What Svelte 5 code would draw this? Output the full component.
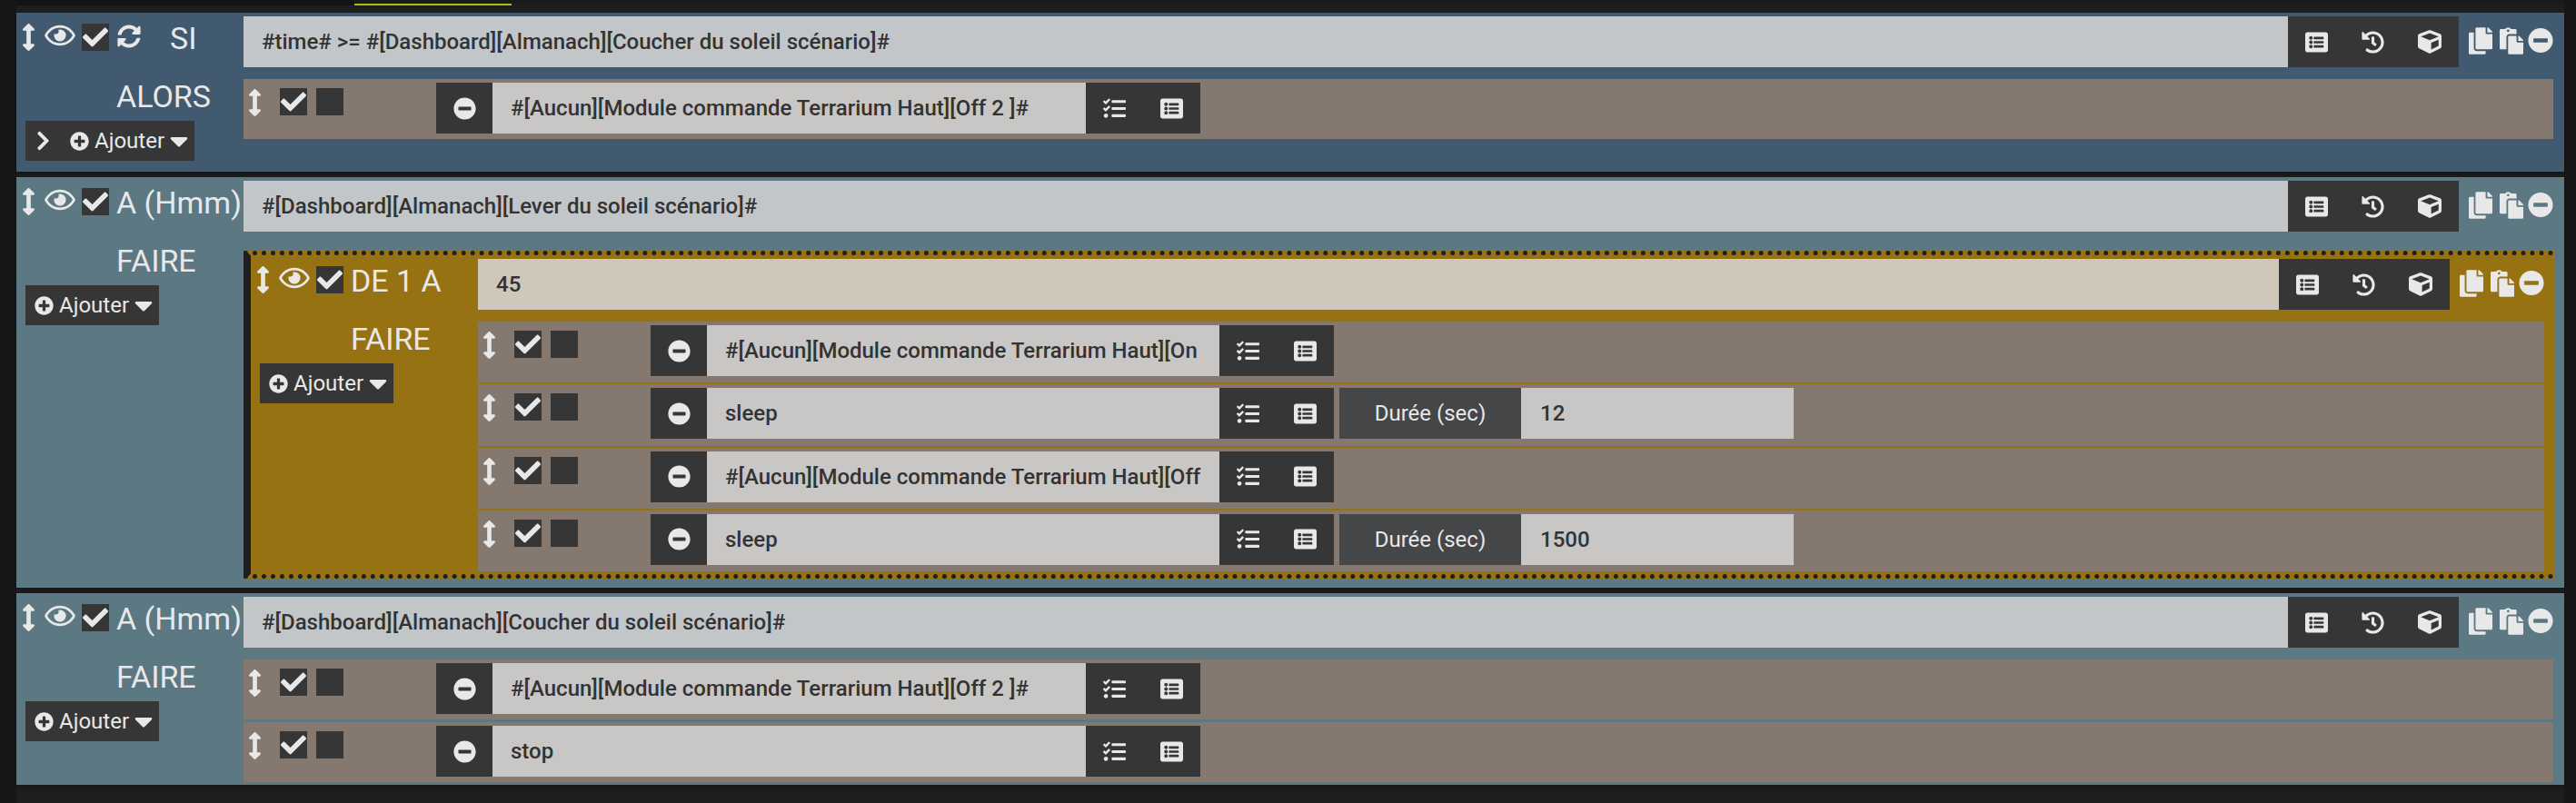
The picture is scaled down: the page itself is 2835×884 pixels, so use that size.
<script>
  // font-awesome style glyph paths, [viewBox width, path]
  const icons = {
    move: [256, 'M214.059 377.941H168V134.059h46.059c21.382 0 32.09-25.851 16.971-40.971L144.971 7.029c-9.373-9.373-24.569-9.373-33.941 0L24.971 93.088c-15.119 15.119-4.411 40.971 16.971 40.971H88v243.882H41.941c-21.382 0-32.09 25.851-16.971 40.971l86.059 86.059c9.373 9.373 24.569 9.373 33.941 0l86.059-86.059c15.12-15.119 4.412-40.971-16.97-40.971z'],
    eye: [576, 'M288 144a110.94 110.94 0 0 0-31.24 5 55.4 55.4 0 0 1 7.24 27 56 56 0 0 1-56 56 55.4 55.4 0 0 1-27-7.24A111.71 111.71 0 1 0 288 144zm284.52 97.4C518.29 135.59 410.93 64 288 64S57.68 135.64 3.48 241.41a32.35 32.35 0 0 0 0 29.19C57.71 376.41 165.07 448 288 448s230.32-71.64 284.52-177.41a32.35 32.35 0 0 0 0-29.19zM288 400c-98.65 0-189.09-55-237.93-144C98.91 167 189.34 112 288 112s189.09 55 237.93 144C477.1 345 386.66 400 288 400z'],
    check: [512, 'M173.898 439.404l-166.4-166.4c-9.997-9.997-9.997-26.206 0-36.204l36.203-36.204c9.997-9.998 26.207-9.998 36.204 0L192 312.69 432.095 72.596c9.997-9.997 26.207-9.997 36.204 0l36.203 36.204c9.997 9.997 9.997 26.206 0 36.204l-294.4 294.401c-9.998 9.997-26.207 9.997-36.204-.001z'],
    sync: [512, 'M370.72 133.28C339.458 104.008 298.888 87.962 255.848 88c-77.458.068-144.328 53.178-162.791 126.85-1.344 5.363-6.122 9.15-11.651 9.15H24.103c-7.498 0-13.194-6.807-11.807-14.176C33.933 94.924 134.813 8 256 8c66.448 0 126.791 26.136 171.315 68.685L463.03 40.97C478.149 25.851 504 36.559 504 57.941V192c0 13.255-10.745 24-24 24H345.941c-21.382 0-32.09-25.851-16.971-40.971l41.75-41.749zM32 296h134.059c21.382 0 32.09 25.851 16.971 40.971l-41.75 41.75c31.262 29.273 71.835 45.319 114.876 45.28 77.418-.07 144.315-53.144 162.787-126.849 1.344-5.363 6.122-9.15 11.651-9.15h57.304c7.498 0 13.194 6.807 11.807 14.176C478.067 417.076 377.187 504 256 504c-66.448 0-126.791-26.136-171.315-68.685L48.97 471.03C33.851 486.149 8 475.441 8 454.059V320c0-13.255 10.745-24 24-24z'],
    minus: [512, 'M256 8C119 8 8 119 8 256s111 248 248 248 248-111 248-248S393 8 256 8zM124 296c-6.6 0-12-5.4-12-12v-56c0-6.6 5.4-12 12-12h264c6.6 0 12 5.4 12 12v56c0 6.6-5.4 12-12 12H124z'],
    plus: [512, 'M256 8C119 8 8 119 8 256s111 248 248 248 248-111 248-248S393 8 256 8zm144 276c0 6.6-5.4 12-12 12h-92v92c0 6.6-5.4 12-12 12h-56c-6.6 0-12-5.4-12-12v-92h-92c-6.6 0-12-5.4-12-12v-56c0-6.6 5.4-12 12-12h92v-92c0-6.6 5.4-12 12-12h56c6.6 0 12 5.4 12 12v92h92c6.6 0 12 5.4 12 12v56z'],
    caret: [320, 'M31.3 192h257.3c17.8 0 26.7 21.5 14.1 34.1L174.1 354.8c-7.8 7.8-20.5 7.8-28.3 0L17.2 226.1C4.6 213.5 13.5 192 31.3 192z'],
    chevron: [320, 'M285.476 272.971L91.132 467.314c-9.373 9.373-24.569 9.373-33.941 0l-22.667-22.667c-9.357-9.357-9.375-24.522-.04-33.901L188.505 256 34.484 101.255c-9.335-9.379-9.317-24.544.04-33.901l22.667-22.667c9.373-9.373 24.569-9.373 33.941 0L285.475 239.03c9.373 9.372 9.373 24.568.001 33.941z'],
    list: [512, 'M464 480H48c-26.51 0-48-21.49-48-48V80c0-26.51 21.49-48 48-48h416c26.51 0 48 21.49 48 48v352c0 26.51-21.49 48-48 48zM128 120c-22.091 0-40 17.909-40 40s17.909 40 40 40 40-17.909 40-40-17.909-40-40-40zm0 96c-22.091 0-40 17.909-40 40s17.909 40 40 40 40-17.909 40-40-17.909-40-40-40zm0 96c-22.091 0-40 17.909-40 40s17.909 40 40 40 40-17.909 40-40-17.909-40-40-40zm288-136v-32c0-6.627-5.373-12-12-12H204c-6.627 0-12 5.373-12 12v32c0 6.627 5.373 12 12 12h200c6.627 0 12-5.373 12-12zm0 96v-32c0-6.627-5.373-12-12-12H204c-6.627 0-12 5.373-12 12v32c0 6.627 5.373 12 12 12h200c6.627 0 12-5.373 12-12zm0 96v-32c0-6.627-5.373-12-12-12H204c-6.627 0-12 5.373-12 12v32c0 6.627 5.373 12 12 12h200c6.627 0 12-5.373 12-12z'],
    history: [512, 'M504 255.531c.253 136.64-111.18 248.372-247.82 248.468-59.015.042-113.223-20.53-155.822-54.911-11.077-8.94-11.905-25.541-1.839-35.607l11.267-11.267c8.609-8.609 22.353-9.551 31.891-1.984C173.062 425.135 212.781 440 256 440c101.705 0 184-82.311 184-184 0-101.705-82.311-184-184-184-48.814 0-93.149 18.969-126.068 49.932l50.754 50.754c10.08 10.08 2.941 27.314-11.313 27.314H24c-8.837 0-16-7.163-16-16V38.627c0-14.254 17.234-21.393 27.314-11.314l49.372 49.372C129.209 34.136 189.552 8 256 8c136.81 0 247.747 110.78 248 247.531zm-180.912 78.784l9.823-12.63c8.138-10.463 6.253-25.542-4.21-33.679L288 256.349V152c0-13.255-10.745-24-24-24h-16c-13.255 0-24 10.745-24 24v135.651l65.409 50.874c10.463 8.137 25.541 6.253 33.679-4.21z'],
    cube: [512, 'M239.1 6.3l-208 78c-18.7 7-31.1 25-31.1 45v225.1c0 18.2 10.3 34.8 26.5 42.9l208 104c13.5 6.8 29.4 6.8 42.9 0l208-104c16.3-8.1 26.5-24.8 26.5-42.9V129.3c0-20-12.4-37.9-31.1-44.9l-208-78C262 2.2 250 2.2 239.1 6.3zM256 68.4l192 72v1.1l-192 78-192-78v-1.1l192-72zm32 356V275.5l160-65v133.9l-160 80z'],
    tasks: [512, 'M139.61 35.5a12 12 0 0 0-17 0L58.93 98.81l-22.7-22.12a12 12 0 0 0-17 0L3.53 92.41a12 12 0 0 0 0 17l47.59 47.4a12.78 12.78 0 0 0 17.61 0l15.59-15.62L156.52 69a12.09 12.09 0 0 0 .09-17zm0 159.19a12 12 0 0 0-17 0l-63.68 63.72-22.7-22.1a12 12 0 0 0-17 0L3.53 252a12 12 0 0 0 0 17L51 316.5a12.77 12.77 0 0 0 17.6 0l15.7-15.69 72.2-72.22a12 12 0 0 0 .09-16.9zM64 368c-26.49 0-48.59 21.5-48.59 48S37.53 464 64 464a48 48 0 0 0 0-96zm432 16H208a16 16 0 0 0-16 16v32a16 16 0 0 0 16 16h288a16 16 0 0 0 16-16v-32a16 16 0 0 0-16-16zm0-320H208a16 16 0 0 0-16 16v32a16 16 0 0 0 16 16h288a16 16 0 0 0 16-16V80a16 16 0 0 0-16-16zm0 160H208a16 16 0 0 0-16 16v32a16 16 0 0 0 16 16h288a16 16 0 0 0 16-16v-32a16 16 0 0 0-16-16z'],
    copy: [448, 'M320 448v40c0 13.255-10.745 24-24 24H24c-13.255 0-24-10.745-24-24V120c0-13.255 10.745-24 24-24h72v296c0 30.879 25.121 56 56 56h168zm0-344V0H152c-13.255 0-24 10.745-24 24v368c0 13.255 10.745 24 24 24h272c13.255 0 24-10.745 24-24V128H344c-13.2 0-24-10.8-24-24zm120.971-31.029L375.029 7.029A24 24 0 0 0 358.059 0H352v96h96v-6.059a24 24 0 0 0-7.029-16.97z'],
    paste: [448, 'M128 184c0-30.879 25.122-56 56-56h136V56c0-13.255-10.745-24-24-24h-80.61C204.306 12.89 183.637 0 160 0s-44.306 12.89-55.39 32H24C10.745 32 0 42.745 0 56v336c0 13.255 10.745 24 24 24h104V184zm32-144c13.255 0 24 10.745 24 24s-10.745 24-24 24-24-10.745-24-24 10.745-24 24-24zm184 248h104v200c0 13.255-10.745 24-24 24H184c-13.255 0-24-10.745-24-24V184c0-13.255 10.745-24 24-24h136v104c0 13.2 10.8 24 24 24zm104-38.059V256h-96v-96h6.059a24 24 0 0 1 16.97 7.029l65.941 65.941a24.002 24.002 0 0 1 7.03 16.971z']
  };

  const offRow = '#[Aucun][Module commande Terrarium Haut][Off 2 ]#';

  const blocks = [
    {
      tone: 'si', label: 'SI', sync: true, value: '#time# >= #[Dashboard][Almanach][Coucher du soleil scénario]#',
      side: 'ALORS', toggle: true,
      rows: [{ value: offRow }]
    },
    {
      tone: 'at', label: 'A (Hmm)', value: '#[Dashboard][Almanach][Lever du soleil scénario]#',
      side: 'FAIRE',
      loop: {
        label: 'DE 1 A', value: '45', side: 'FAIRE',
        rows: [
          { value: '#[Aucun][Module commande Terrarium Haut][On' },
          { value: 'sleep', duration: '12' },
          { value: '#[Aucun][Module commande Terrarium Haut][Off' },
          { value: 'sleep', duration: '1500' }
        ]
      }
    },
    {
      tone: 'at', label: 'A (Hmm)', value: '#[Dashboard][Almanach][Coucher du soleil scénario]#',
      side: 'FAIRE',
      rows: [{ value: offRow }, { value: 'stop' }]
    }
  ];
</script>

{#snippet icon(name, size, cls = '')}
  <svg class="icon {cls}" height={size} viewBox="0 0 {icons[name][0]} 512"><path d={icons[name][1]} /></svg>
{/snippet}

{#snippet head(block)}
  <div class="head">
    <div class="tools">
      {@render icon('move', 30, 'move')}
      {@render icon('eye', 30, 'eye')}
      <span class="box">{@render icon('check', 30)}</span>
      {#if block.sync}
        {@render icon('sync', 26, 'sync')}
        <span class="title si-title">{block.label}</span>
      {:else}
        <span class="title">{block.label}</span>
      {/if}
    </div>
    <div class="cond" class:num={block.value === '45'}>{block.value}</div>
    <div class="btns">
      {@render icon('list', 25)}
      {@render icon('history', 25)}
      {@render icon('cube', 26)}
    </div>
    <div class="actions">
      {@render icon('copy', 30, 'copy')}
      {@render icon('paste', 30, 'paste')}
      {@render icon('minus', 29, 'remove')}
    </div>
  </div>
{/snippet}

{#snippet side(label, toggle)}
  <div class="side">
    <div class="side-label">{label}</div>
    <button class="add" class:toggle>
      {#if toggle}{@render icon('chevron', 24, 'chev')}{/if}
      {@render icon('plus', 21)}
      <span>Ajouter</span>
      {@render icon('caret', 32, 'caret')}
    </button>
  </div>
{/snippet}

{#snippet rows(list)}
  <div class="rows">
    {#each list as row}
      <div class="row">
        {@render icon('move', 30, 'move')}
        <span class="box first">{@render icon('check', 30)}</span>
        <span class="box"></span>
        <div class="action">
          <div class="del">{@render icon('minus', 25)}</div>
          <div class="expr">{row.value}</div>
          <div class="btns small">
            {@render icon('tasks', 25)}
            {@render icon('list', 25)}
          </div>
          {#if row.duration}
            <div class="opt-label">Durée (sec)</div>
            <div class="opt-value">{row.duration}</div>
          {/if}
        </div>
      </div>
    {/each}
  </div>
{/snippet}

<div class="page">
  <div class="topbar">
    <div class="tab-left"></div>
    <div class="tab"></div>
    <div class="tab-right"></div>
  </div>
  <div class="list">
    {#each blocks as block}
      <section class="block {block.tone}">
        {@render head(block)}
        <div class="body">
          {@render side(block.side, block.toggle)}
          {#if block.loop}
            <div class="loop">
              {@render head(block.loop)}
              <div class="body">
                {@render side(block.loop.side)}
                {@render rows(block.loop.rows)}
              </div>
            </div>
          {:else}
            {@render rows(block.rows)}
          {/if}
        </div>
      </section>
    {/each}
  </div>
</div>

<style>
  :global(body) {
    margin: 0;
    background: #171717;
  }

  .page {
    width: 2835px;
    height: 884px;
    overflow: hidden;
    font-family: Roboto, sans-serif;
    color: #e8e8e8;
  }

  .topbar {
    display: flex;
    align-items: flex-start;
    width: 2804px;
    height: 6px;
    margin-left: 18px;
    background: #1e1e1e;
  }

  .tab-left {
    width: 372px;
    height: 6px;
    background: #121314;
  }

  .tab {
    width: 173px;
    height: 4px;
    background: #1a1a1a;
    border-bottom: 2px solid #9dc01f;
  }

  .tab-right {
    flex: 1;
    height: 4px;
    background: #1a1a1a;
  }

  .list {
    width: 2804px;
    height: 878px;
    box-sizing: border-box;
    margin-left: 18px;
    padding-top: 8px;
    background: #1e1e1e;
  }

  .block {
    padding: 4px 12px 3px 0;
    margin-bottom: 6px;
    box-shadow: 0 3px 4px rgba(0, 0, 0, 0.25);
  }

  .si {
    background: #425a6f;
  }

  .at {
    background: #5b7883;
  }

  .icon {
    display: block;
    flex: none;
    fill: #e8e8e8;
  }

  .head {
    display: flex;
    height: 56px;
  }

  .tools {
    width: 250px;
    flex: none;
    display: flex;
    align-items: flex-start;
    padding-top: 8px;
    box-sizing: border-box;
  }

  .move {
    width: 15px;
    margin-left: 6px;
  }

  .eye {
    margin: -2px 7px 0 10px;
    width: 34px;
  }

  .box {
    width: 30px;
    height: 30px;
    flex: none;
    background: #363636;
    display: flex;
    align-items: center;
    justify-content: center;
  }

  .box .icon {
    height: 28px;
    width: 30px;
  }

  .sync {
    margin: 1px 0 0 9px;
  }

  .title {
    font-size: 34px;
    font-weight: 400;
    line-height: 38px;
    margin: -3px 0 0 8px;
    white-space: nowrap;
  }

  .si-title {
    margin-left: 32px;
  }

  .cond {
    flex: 1;
    background: #c2c6c9;
    color: #333;
    font-size: 24px;
    font-weight: 500;
    line-height: 57px;
    padding-left: 20px;
    white-space: nowrap;
    overflow: hidden;
  }

  .cond.num {
    background: #cfc8ba;
  }

  .btns {
    width: 188px;
    flex: none;
    display: flex;
    align-items: center;
    justify-content: space-around;
    background: #363636;
  }

  .btns.small {
    width: 126px;
  }

  .actions {
    width: 104px;
    flex: none;
    display: flex;
    align-items: center;
    padding: 0 0 3px 11px;
    box-sizing: border-box;
  }

  .copy {
    width: 26px;
    margin-right: 8px;
  }

  .paste {
    width: 26px;
    margin-right: 5px;
  }

  .remove {
    width: 28px;
  }

  .body {
    display: flex;
    margin-top: 13px;
  }

  .side {
    width: 250px;
    flex: none;
  }

  .side-label {
    font-size: 34px;
    font-weight: 400;
    line-height: 38px;
    margin: 0 0 8px 110px;
  }

  .add {
    display: flex;
    align-items: center;
    height: 44px;
    margin: 0 0 9px 10px;
    padding: 0 7px 0 10px;
    border: 0;
    background: #363636;
    color: #e8e8e8;
    font: 400 24px Roboto, sans-serif;
  }

  .add.toggle {
    padding-left: 12px;
  }

  .add span {
    margin-left: 6px;
  }

  .chev {
    width: 15px;
    margin-right: 22px;
  }

  .caret {
    width: 20px;
    margin-left: 6px;
  }

  .rows {
    flex: 1;
    min-width: 0;
    display: flex;
    flex-direction: column;
    gap: 3px;
  }

  .row {
    height: 66px;
    display: flex;
    align-items: flex-start;
    background: #85786f;
  }

  .row .move {
    margin: 11px 0 0 5px;
  }

  .row .box {
    margin-top: 10px;
  }

  .row .first {
    margin-left: 20px;
    margin-right: 10px;
  }

  .action {
    display: flex;
    height: 56px;
    margin: 4px 0 0 102px;
  }

  .del {
    width: 62px;
    display: flex;
    align-items: center;
    justify-content: center;
    background: #363636;
  }

  .expr {
    width: 653px;
    height: 56px;
    box-sizing: border-box;
    padding: 0 20px;
    background: #c9c7c5;
    color: #333;
    font-size: 24px;
    font-weight: 500;
    line-height: 57px;
    overflow: hidden;
  }

  .loop {
    flex: 1;
    min-width: 0;
    margin: 8px -2px 7px 0;
    padding: 4px 12px 3px 0;
    background: #967212;
    border-top: 5px dotted #1e1e1e;
    border-bottom: 5px dotted #1e1e1e;
    border-left: 8px solid #1e1e1e;
  }

  .loop .rows {
    gap: 2px;
  }

  .loop .row {
    height: 67.3px;
  }

  .loop .action {
    margin-left: 80px;
  }

  .loop .expr {
    width: 564px;
  }

  .opt-label {
    width: 200px;
    margin-left: 6px;
    background: #454648;
    font-size: 24px;
    line-height: 56px;
    text-align: center;
  }

  .opt-value {
    width: 300px;
    box-sizing: border-box;
    padding-left: 21px;
    background: #c9c7c5;
    color: #333;
    font-size: 24px;
    font-weight: 500;
    line-height: 57px;
  }
</style>
